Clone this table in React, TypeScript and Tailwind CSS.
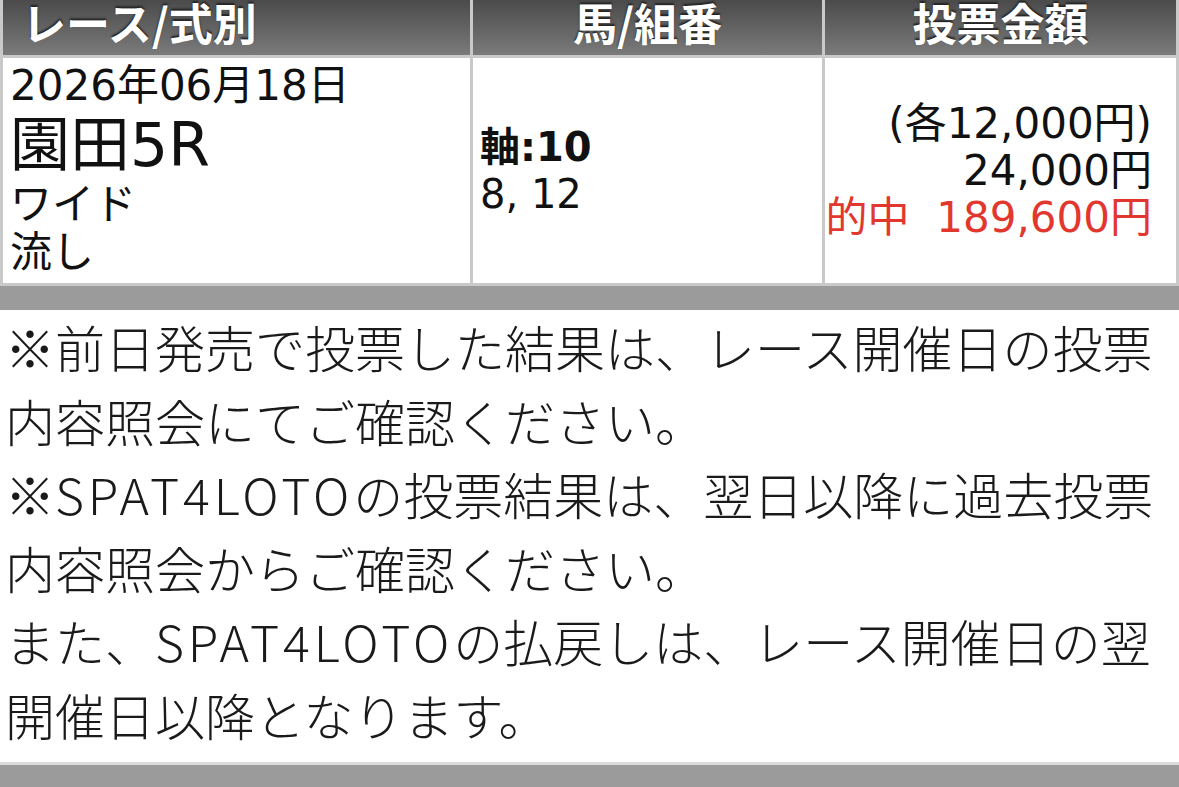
const FONT = "font-['DejaVu_Sans','Noto_Sans_CJK_JP',sans-serif]";

const headers = [
  { label: "レース/式別", align: "justify-start pl-[19px]" },
  { label: "馬/組番", align: "justify-center" },
  { label: "投票金額", align: "justify-center" },
];

// Latin runs are spaced out a little to match the width of the original font
const Latin = ({ children }: { children: string }) => (
  <span className="tracking-[3.8px]">{children}</span>
);

export default function App() {
  return (
    <div className={`w-[1179px] h-[787px] overflow-hidden bg-white text-[#111] ${FONT}`}>
      {/* Bet table */}
      <div className="grid grid-cols-[467px_349px_minmax(0,1fr)] gap-[3px] bg-[#c9c9c9] px-[3px] pb-[3px]">
        {headers.map((h) => (
          <div
            key={h.label}
            className={`h-[55px] flex items-start ${h.align} bg-linear-to-b from-[#4b4b4b] to-[#7b7b7b] font-['Noto_Sans_CJK_JP',sans-serif] font-bold text-[44px] leading-[44px] text-white [text-shadow:0_-2px_2px_#222]`}
          >
            {h.label}
          </div>
        ))}

        {/* Race / type */}
        <div className="h-[225px] bg-white pl-[7px] pt-[3px] text-[42px]">
          <div className="leading-[50px] whitespace-nowrap">2026年06月18日</div>
          <div className="text-[60px] leading-[68px]">園田5R</div>
          <div className="leading-[52px]">ワイド</div>
          <div className="leading-[44px]">流し</div>
        </div>

        {/* Horses */}
        <div className="h-[225px] bg-white pl-[7px] flex flex-col justify-center text-[40px] leading-[47px]">
          <div className="font-bold">軸:10</div>
          <div>8, 12</div>
        </div>

        {/* Amount */}
        <div className="h-[225px] bg-white pr-[24px] flex flex-col justify-center items-end text-[42px] leading-[47px] whitespace-pre">
          <div>(各12,000円)</div>
          <div>24,000円</div>
          <div className="text-[#e2372f]">的中  189,600円</div>
        </div>
      </div>

      <div className="h-[24px] bg-[#9b9b9b]" />

      {/* Notes */}
      <div className="pl-[5px] pb-[11px] text-[50px] leading-[73.5px] text-[#1a1a1a] font-['Noto_Sans_CJK_JP',sans-serif] font-light whitespace-nowrap">
        <div>※前日発売で投票した結果は、レース開催日の投票</div>
        <div>内容照会にてご確認ください。</div>
        <div>
          ※<Latin>SPAT4LOTO</Latin>の投票結果は、翌日以降に過去投票
        </div>
        <div>内容照会からご確認ください。</div>
        <div>
          また、<Latin>SPAT4LOTO</Latin>の払戻しは、レース開催日の翌
        </div>
        <div>開催日以降となります。</div>
      </div>

      <div className="h-[3px] bg-[#dcdcdc]" />
      <div className="h-[22px] bg-[#9b9b9b]" />
    </div>
  );
}
